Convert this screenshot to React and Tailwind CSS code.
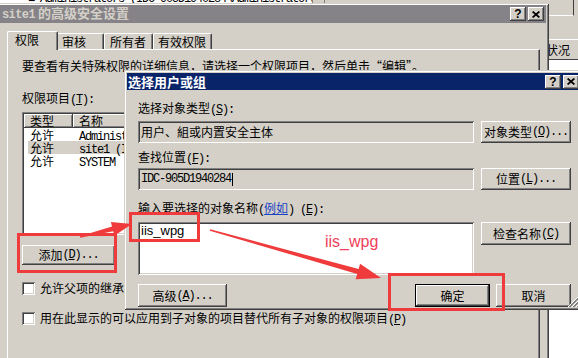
import React from 'react';

const raised =
  'shadow-[inset_-1px_-1px_0_#404040,inset_1px_1px_0_#ffffff,inset_-2px_-2px_0_#808080]';
const sunken =
  'shadow-[inset_1px_1px_0_#808080,inset_-1px_-1px_0_#ffffff,inset_2px_2px_0_#404040,inset_-2px_-2px_0_#d4d0c8]';
const frame =
  'shadow-[inset_1px_1px_0_#d4d0c8,inset_-1px_-1px_0_#404040,inset_2px_2px_0_#ffffff,inset_-2px_-2px_0_#808080]';

// half-width latin, like SimSun
function M({ children }) {
  return (
    <span className="font-['Liberation_Mono',monospace] text-[12px] tracking-[-1.2px]">{children}</span>
  );
}

function Btn({ className = '', children, isDefault = false }) {
  const edge = isDefault
    ? 'shadow-[inset_0_0_0_1px_#000000,inset_-2px_-2px_0_#404040,inset_2px_2px_0_#ffffff,inset_-3px_-3px_0_#808080]'
    : raised;
  return (
    <div className={`flex items-center justify-center whitespace-nowrap bg-[#d4d0c8] ${edge} ${className}`}>
      {children}
    </div>
  );
}

function CaptionButtons() {
  return (
    <div className="ml-auto flex gap-[2px]">
      <Btn className="w-[16px] h-[14px]">
        <span className="font-['Liberation_Sans',sans-serif] font-bold text-[12px] leading-none text-black">?</span>
      </Btn>
      <Btn className="w-[16px] h-[14px]">
        <svg width="8" height="7" viewBox="0 0 8 7">
          <path d="M0.6 0.5L7.4 6.5M7.4 0.5L0.6 6.5" stroke="#000" strokeWidth="1.7" />
        </svg>
      </Btn>
    </div>
  );
}

function Check() {
  return <div className={`w-[13px] h-[13px] shrink-0 bg-white ${sunken}`} />;
}

const entries = [
  { type: '允许', name: 'Administrators (IDC-905D1940284\\Administrators)' },
  { type: '允许', name: 'site1 (IDC-905D1940284\\site1)', selected: true },
  { type: '允许', name: 'SYSTEM' },
];

export default function App() {
  return (
    <div className="relative w-[578px] h-[358px] overflow-hidden bg-[#d4d0c8] font-['Noto_Sans_CJK_SC',sans-serif] text-[12px] leading-[14px] text-black">
      {/* window peeking out at the top */}
      <div className="absolute left-0 top-0 w-[549px] h-[3px] flex overflow-hidden">
        <div className="w-[312px] bg-white overflow-hidden">
          <div className="-mt-[10px] pl-[28px] whitespace-nowrap">
            <M>■ Administrators (IDC-905D1940284\Administrators)</M>
          </div>
        </div>
        <div className="w-[13px] border-l border-r border-[#808080]" />
      </div>

      {/* window on the right, behind */}
      <div className="absolute left-[549px] top-0 w-[29px] h-[358px] bg-[#d4d0c8] flex flex-col">
        <div className="w-[25px] h-[16px] border-b border-r border-b-white border-r-[#404040]" />
        <div className="h-[23px]" />
        <div className="h-[21px] border-t border-b border-t-white border-b-[#404040] pt-[3px] whitespace-nowrap overflow-hidden">
          <span className="-ml-[3px]">状况</span>
        </div>
        <div className="flex-1 bg-white" />
      </div>

      {/* site1 advanced security settings */}
      <div className={`absolute left-[-2px] top-[3px] w-[551px] h-[420px] p-[2px] flex flex-col bg-[#d4d0c8] ${frame}`}>
        <div className="h-[18px] mr-[1px] bg-[#858387] flex items-center pl-[2px] pr-[2px]">
          <span className="text-[#d4d0c8] font-bold text-[13px] leading-[16px] whitespace-nowrap">
            <span className="font-['Liberation_Mono',monospace] text-[12px] tracking-[-0.6px]">site1</span> 的高级安全设置
          </span>
          <CaptionButtons />
        </div>

        <div className="mt-[8px] pl-[7px] flex flex-col">
          <div className="flex items-end h-[18px]">
            <div className="relative z-10 w-[51px] h-[19px] -mb-px bg-[#d4d0c8] border-l border-t border-r border-white border-r-[#404040] rounded-tl-[2px] rounded-tr-[2px] shadow-[inset_-1px_0_0_#808080] pl-[7px] pt-[1px]">
              权限
            </div>
            <div className="w-[46px] h-[16px] border-t border-r border-white border-r-[#404040] rounded-tr-[2px] shadow-[inset_-1px_0_0_#808080] pl-[4px] pt-[1px]">
              审核
            </div>
            <div className="w-[49px] h-[16px] border-l border-t border-r border-white border-r-[#404040] rounded-tl-[2px] rounded-tr-[2px] shadow-[inset_-1px_0_0_#808080] pl-[5px] pt-[1px]">
              所有者
            </div>
            <div className="w-[59px] h-[16px] border-l border-t border-r border-white border-r-[#404040] rounded-tl-[2px] rounded-tr-[2px] shadow-[inset_-1px_0_0_#808080] pl-[4px] pt-[1px]">
              有效权限
            </div>
          </div>

          <div className="w-[533px] h-[320px] border-l border-t border-r border-white border-r-[#404040] shadow-[inset_-1px_0_0_#808080] pl-[14px] pt-[9px] flex flex-col">
            <div className="whitespace-nowrap">要查看有关特殊权限的详细信息，请选择一个权限项目，然后单击“编辑”。</div>
            <div className="mt-[18px] whitespace-nowrap">
              权限项目<M>(<u>T</u>):</M>
            </div>

            <div className={`mt-[5px] w-[508px] h-[123px] bg-white p-[2px] ${sunken}`}>
              <div className="flex h-[14px] leading-[14px]">
                <div className={`w-[49px] bg-[#d4d0c8] pl-[6px] ${raised}`}>类型</div>
                <div className={`flex-1 bg-[#d4d0c8] pl-[6px] ${raised}`}>名称</div>
              </div>
              {entries.map((e) => (
                <div key={e.name} className="h-[13px] leading-[13px] pl-[4px] flex">
                  <div className={`flex flex-1 whitespace-nowrap ${e.selected ? 'bg-[#d4d0c8]' : ''}`}>
                    <div className="w-[45px] pl-[2px]">{e.type}</div>
                    <div className="pl-[6px]">
                      <M>{e.name}</M>
                    </div>
                  </div>
                </div>
              ))}
            </div>

            <Btn className="mt-[10px] w-[93px] h-[20px]">
              添加<M>(<u>D</u>)...</M>
            </Btn>

            <div className="mt-[17px] h-[13px] flex items-center gap-[5px] whitespace-nowrap">
              <Check />
              <span>
                允许父项的继承权限传播到该对象和所有子对象。包括那些在此明确定义的项目<M>(<u>A</u>)</M>
              </span>
            </div>
            <div className="mt-[17px] h-[13px] flex items-center gap-[5px] whitespace-nowrap">
              <Check />
              <span>
                用在此显示的可以应用到子对象的项目替代所有子对象的权限项目<M>(<u>P</u>)</M>
              </span>
            </div>
          </div>
        </div>
      </div>

      {/* select users or groups */}
      <div className={`absolute left-[124px] top-[70px] w-[458px] h-[240px] p-[3px] flex flex-col bg-[#d4d0c8] ${frame}`}>
        <div className="h-[17px] bg-[#0a246a] flex items-center pl-[1px]">
          <span className="text-white font-bold text-[13px] leading-[16px] whitespace-nowrap">选择用户或组</span>
          <CaptionButtons />
        </div>

        <div className="pl-[11px] flex flex-col">
          <div className="mt-[11px] whitespace-nowrap">
            选择对象类型<M>(<u>S</u>):</M>
          </div>
          <div className="mt-[4px] flex gap-[7px]">
            <div className={`w-[336px] h-[22px] pl-[3px] flex items-center bg-[#d4d0c8] ${sunken}`}>
              用户、組或内置安全主体
            </div>
            <Btn className="w-[90px] h-[22px]">
              对象类型<M>(<u>O</u>)...</M>
            </Btn>
          </div>

          <div className="mt-[7px] whitespace-nowrap">
            查找位置<M>(<u>F</u>):</M>
          </div>
          <div className="mt-[2px] flex gap-[7px]">
            <div className={`w-[336px] h-[22px] pl-[3px] flex items-center bg-[#d4d0c8] ${sunken}`}>
              <M>IDC-905D1940284</M>
              <div className="ml-[1px] w-px h-[13px] bg-black" />
            </div>
            <Btn className="w-[90px] h-[22px]">
              位置<M>(<u>L</u>)...</M>
            </Btn>
          </div>

          <div className="mt-[11px] whitespace-nowrap">
            输入要选择的对象名称<M>(</M>
            <span className="text-[#1a44c2] underline">例如</span>
            <M>) (<u>E</u>):</M>
          </div>
          <div className="mt-[5px] flex gap-[7px] items-start">
            <div className={`w-[336px] h-[53px] bg-white pl-[3px] pt-[1px] ${sunken}`}>
              <span className="font-['Liberation_Sans',sans-serif] text-[13px] leading-[16px]">iis_wpg</span>
            </div>
            <Btn className="w-[90px] h-[23px]">
              检查名称<M>(<u>C</u>)</M>
            </Btn>
          </div>

          <div className="mt-[9px] w-[433px] flex">
            <Btn className="w-[89px] h-[23px]">
              高级<M>(<u>A</u>)...</M>
            </Btn>
            <Btn isDefault className="ml-auto w-[75px] h-[23px]">
              确定
            </Btn>
            <Btn className="ml-[6px] w-[75px] h-[23px]">取消</Btn>
          </div>
        </div>

        <svg className="absolute right-[3px] bottom-[3px]" width="12" height="12" viewBox="0 0 12 12">
          <path d="M12 1L1 12M12 5L5 12M12 9L9 12" stroke="#ffffff" />
          <path d="M12 2L2 12M12 3L3 12M12 6L6 12M12 7L7 12M12 10L10 12M12 11L11 12" stroke="#808080" />
        </svg>
      </div>

      {/* red annotations */}
      <svg className="absolute left-0 top-0 pointer-events-none" width="578" height="358" viewBox="0 0 578 358">
        <g fill="none" stroke="#ef3b3b" strokeWidth="3">
          <rect x="18.5" y="234.5" width="97" height="37" />
          <rect x="130.5" y="213.5" width="68" height="27" />
          <rect x="389.5" y="274.5" width="114" height="35" />
        </g>
        <g fill="#ef3b3b">
          <polygon points="79.8,236.2 112,226.5 110.9,222.1 132,224 114.3,235.7 113.2,231.3 80.2,237.8" />
          <polygon points="210.2,229.3 358.6,269.1 360.1,263.8 381,278 355.7,279.2 357.2,273.9 209.8,230.7" />
        </g>
      </svg>
      <div className="absolute left-[325px] top-[232px] font-['Liberation_Sans',sans-serif] text-[16px] leading-[20px] text-[#f0405a]">
        iis_wpg
      </div>
    </div>
  );
}
